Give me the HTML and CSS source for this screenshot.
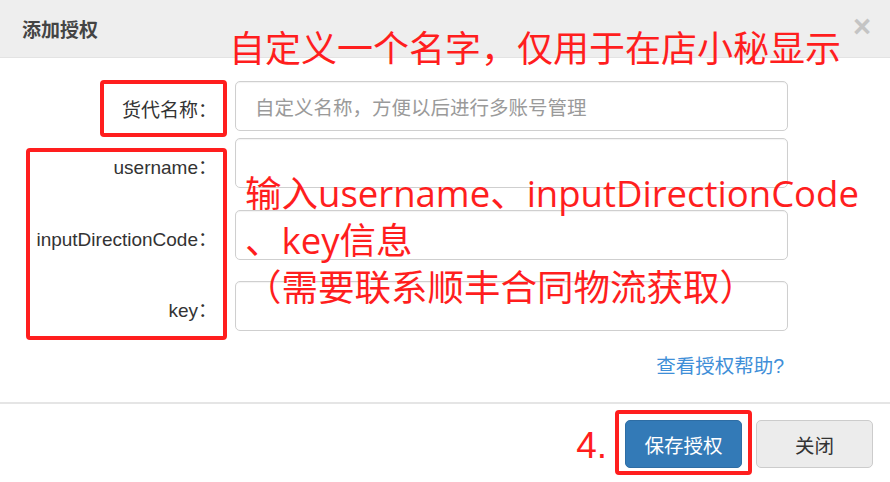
FILE: index.html
```html
<!DOCTYPE html>
<html lang="zh-CN">
<head>
<meta charset="utf-8">
<title>添加授权</title>
<link rel="stylesheet" href="styles.css">
</head>
<body>
<div class="modal">
  <div class="modal-header">
    <h4 class="modal-title">添加授权</h4>
    <span class="close">×</span>
  </div>
  <div class="modal-body">
    <div class="form-row row-1">
      <label class="label">货代名称：</label>
      <div class="input"><span class="placeholder">自定义名称，方便以后进行多账号管理</span></div>
    </div>
    <div class="form-row row-2">
      <label class="label">username：</label>
      <div class="input"></div>
    </div>
    <div class="form-row row-3">
      <label class="label">inputDirectionCode：</label>
      <div class="input"></div>
    </div>
    <div class="form-row row-4">
      <label class="label">key：</label>
      <div class="input"></div>
    </div>
    <div class="help-row">
      <a class="help-link">查看授权帮助?</a>
    </div>
  </div>
  <div class="modal-footer">
    <span class="step-num">4.</span>
    <button class="btn btn-primary">保存授权</button>
    <button class="btn btn-default">关闭</button>
  </div>

  <div class="note note-1">自定义一个名字，仅用于在店小秘显示</div>
  <div class="note note-2">
    <div>输入username、inputDirectionCode</div>
    <div>、key信息</div>
    <div>（需要联系顺丰合同物流获取）</div>
  </div>
  <div class="red-box box-1"></div>
  <div class="red-box box-2"></div>
  <div class="red-box box-3"></div>
</div>
</body>
</html>
```
FILE: styles.css
```css
* { box-sizing: border-box; }
html, body {
  margin: 0;
  padding: 0;
  background: #fff;
}
body {
  font-family: "Liberation Sans", "Noto Sans CJK SC", sans-serif;
  color: #333;
}
.modal {
  position: relative;
  width: 890px;
  height: 482px;
  overflow: hidden;
  background: #fff;
}
.modal-header {
  height: 58px;
  background: #eeeeee;
  border-bottom: 1px solid #e3e3e3;
  display: flex;
  align-items: center;
  justify-content: space-between;
  padding: 0 19px 0 22px;
}
.modal-title {
  margin: 0;
  font-size: 19px;
  font-weight: bold;
  color: #444;
}
.close {
  font-size: 31px;
  font-weight: bold;
  color: #c4c4c4;
  line-height: 1;
  margin-top: -4px;
}
.modal-body {
  padding: 23px 0 0 0;
}
.form-row {
  display: grid;
  grid-template-columns: 217px 553px;
  column-gap: 18px;
  align-items: center;
}
.row-1 { margin-bottom: 7px; }
.row-2 { margin-bottom: 22px; }
.row-3 { margin-bottom: 21px; }
.row-4 { margin-bottom: 0; }
.label {
  text-align: right;
  font-size: 19px;
  color: #333;
  padding-top: 4px;
}
.input {
  height: 50px;
  border: 1px solid #cfcfcf;
  border-radius: 5px;
  display: flex;
  align-items: center;
  padding-left: 19px;
  box-shadow: inset 0 1px 1px rgba(0,0,0,0.05);
}
.placeholder {
  font-size: 19.5px;
  color: #9a9a9a;
}
.help-row {
  display: flex;
  justify-content: flex-end;
  padding-right: 106px;
  padding-top: 23px;
  height: 71px;
}
.help-link {
  font-size: 19.5px;
  color: #3f8fd8;
  line-height: 24px;
}
.modal-footer {
  border-top: 2px solid #e5e5e5;
  display: flex;
  justify-content: flex-end;
  align-items: center;
  padding: 16px 17px 0 0;
  gap: 14px;
}
.btn {
  height: 48px;
  width: 117px;
  border-radius: 5px;
  font-size: 19.5px;
  font-family: "Liberation Sans", "Noto Sans CJK SC", sans-serif;
  padding: 0;
}
.btn-primary {
  background: #337ab7;
  border: 1px solid #2e6da4;
  color: #fff;
}
.btn-default {
  background: #ececec;
  border: 1px solid #cccccc;
  color: #333;
}
.step-num {
  font-family: "Liberation Sans", sans-serif;
  font-size: 37px;
  color: #ff1e1e;
  margin-right: 4px;
  line-height: 1;
  padding-top: 2px;
}
.note {
  position: absolute;
  color: #ff1e1e;
  font-family: "Open Sans", "Noto Sans CJK SC", sans-serif;
  white-space: nowrap;
}
.note-1 {
  left: 229px;
  top: 28px;
  font-size: 36px;
  line-height: 42px;
}
.note-2 {
  left: 245px;
  top: 170px;
  font-size: 36.5px;
  line-height: 47px;
}
.red-box {
  position: absolute;
  border: 4px solid #ff1e1e;
  border-radius: 4px;
}
.box-1 { left: 100px; top: 80px; width: 127px; height: 57px; }
.box-2 { left: 26px; top: 148px; width: 201px; height: 192px; }
.box-3 { left: 615px; top: 410px; width: 137px; height: 65px; }
```
